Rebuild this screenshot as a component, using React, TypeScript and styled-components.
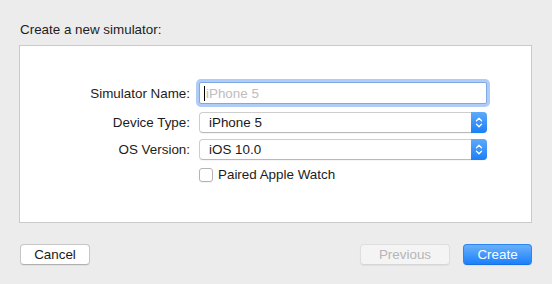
import React from 'react'
import styled, { createGlobalStyle } from 'styled-components'

const GlobalStyle = createGlobalStyle`
  html, body {
    margin: 0;
    padding: 0;
    background: #ececec;
  }
  body {
    font-family: "Liberation Sans", Arial, sans-serif;
    font-size: 13.4px;
    color: #1f1f1f;
    -webkit-font-smoothing: antialiased;
  }
`

const Page = styled.div`
  width: 552px;
  height: 284px;
  box-sizing: border-box;
  padding: 22px 20px 0 19px;
`

const Title = styled.div`
  line-height: 16px;
  padding-left: 1px;
  color: #1c1c1c;
`

const Panel = styled.div`
  margin-top: 7px;
  height: 178px;
  box-sizing: border-box;
  background: #fff;
  border: 1px solid #cacaca;
  padding-top: 36px;
`

const Row = styled.div<{ $mt?: number }>`
  display: flex;
  align-items: center;
  margin-top: ${p => p.$mt ?? 0}px;
`

const Label = styled.div`
  width: 170px;
  margin-right: 9px;
  text-align: right;
  color: #1c1c1c;
`

const TextField = styled.div`
  width: 288px;
  height: 22px;
  box-sizing: border-box;
  display: flex;
  align-items: center;
  padding-left: 4px;
  background: #fff;
  border: 1px solid #7fa9e6;
  border-radius: 2px;
  box-shadow: 0 0 0 3px rgba(120, 170, 240, 0.6);
`

const Caret = styled.span`
  width: 1px;
  height: 15px;
  background: #000;
  margin-right: 1px;
`

const Placeholder = styled.span`
  color: #bdbdbd;
`

const Popup = styled.div`
  width: 288px;
  height: 21px;
  box-sizing: border-box;
  display: flex;
  align-items: center;
  padding-left: 9px;
  background: #fff;
  border: 1px solid #cdcdcd;
  border-bottom-color: #b8b8b8;
  border-radius: 4px;
  box-shadow: 0 1px 1px rgba(0, 0, 0, 0.04);
`

const PopupValue = styled.span`
  flex: 1;
  color: #1a1a1a;
`

const Stepper = styled.div`
  width: 16px;
  height: 21px;
  margin: -1px -1px -1px 0;
  border-radius: 0 4px 4px 0;
  background: linear-gradient(#5eaafa, #1b7ff6);
  display: flex;
  align-items: center;
  justify-content: center;
`

const CheckRow = styled.label`
  display: flex;
  align-items: center;
  gap: 5px;
  color: #1c1c1c;
`

const CheckBox = styled.span`
  width: 14px;
  height: 14px;
  box-sizing: border-box;
  background: #fff;
  border: 1px solid #b4b4b4;
  border-radius: 3px;
  box-shadow: 0 1px 1px rgba(0, 0, 0, 0.05);
`

const Footer = styled.div`
  display: flex;
  align-items: center;
  gap: 13px;
  margin-top: 21px;
  padding-left: 1px;
`

const Spacer = styled.div`
  flex: 1;
`

const Button = styled.div<{ $w: number; $kind?: 'default' | 'disabled' | 'primary' }>`
  width: ${p => p.$w}px;
  height: 21px;
  box-sizing: border-box;
  display: flex;
  align-items: center;
  justify-content: center;
  border-radius: 4px;
  border: 1px solid
    ${p => (p.$kind === 'primary' ? '#2a86f5' : p.$kind === 'disabled' ? '#dedede' : '#c6c6c6')};
  border-bottom-color: ${p =>
    p.$kind === 'primary' ? '#1670e6' : p.$kind === 'disabled' ? '#d6d6d6' : '#b0b0b0'};
  background: ${p =>
    p.$kind === 'primary'
      ? 'linear-gradient(#69b0fa, #1b80fb)'
      : p.$kind === 'disabled'
      ? '#f4f4f4'
      : '#fff'};
  color: ${p => (p.$kind === 'primary' ? '#fff' : p.$kind === 'disabled' ? '#b6b6b6' : '#1a1a1a')};
  box-shadow: 0 1px 1px rgba(0, 0, 0, 0.05);
`

const Arrows = () => (
  <svg width="16" height="21" viewBox="0 0 16 21" fill="none">
    <path d="M5.5 8.8 L8 6.3 L10.5 8.8" stroke="#fff" strokeWidth="1.3" strokeLinecap="round" strokeLinejoin="round" />
    <path d="M5.5 12.2 L8 14.7 L10.5 12.2" stroke="#fff" strokeWidth="1.3" strokeLinecap="round" strokeLinejoin="round" />
  </svg>
)

const App = () => {
  return (
    <>
      <GlobalStyle />
      <Page>
        <Title>Create a new simulator:</Title>
        <Panel>
          <Row>
            <Label>Simulator Name:</Label>
            <TextField>
              <Caret />
              <Placeholder>iPhone 5</Placeholder>
            </TextField>
          </Row>
          <Row $mt={8}>
            <Label>Device Type:</Label>
            <Popup>
              <PopupValue>iPhone 5</PopupValue>
              <Stepper><Arrows /></Stepper>
            </Popup>
          </Row>
          <Row $mt={6}>
            <Label>OS Version:</Label>
            <Popup>
              <PopupValue>iOS 10.0</PopupValue>
              <Stepper><Arrows /></Stepper>
            </Popup>
          </Row>
          <Row $mt={7}>
            <Label />
            <CheckRow>
              <CheckBox />
              Paired Apple Watch
            </CheckRow>
          </Row>
        </Panel>
        <Footer>
          <Button $w={70}>Cancel</Button>
          <Spacer />
          <Button $w={90} $kind="disabled">Previous</Button>
          <Button $w={69} $kind="primary">Create</Button>
        </Footer>
      </Page>
    </>
  )
}

export default App
